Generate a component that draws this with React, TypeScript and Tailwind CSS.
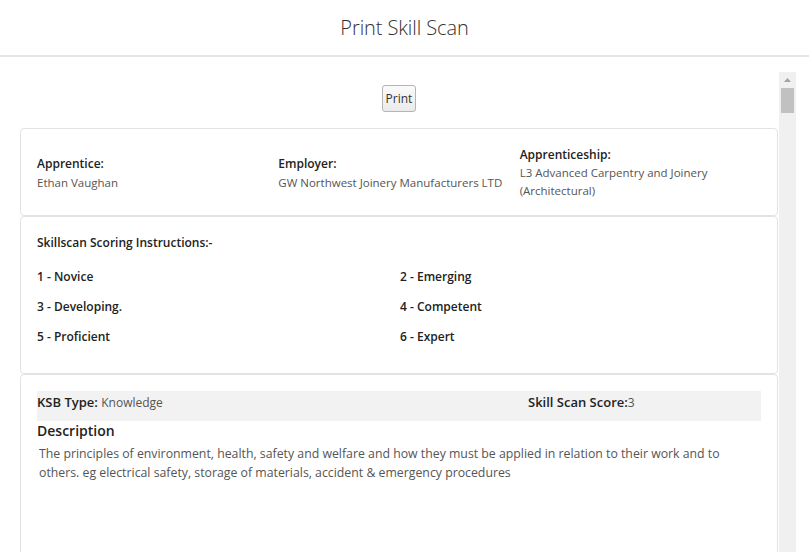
import React from "react";

const font = { fontFamily: '"Open Sans", "Noto Sans", sans-serif' };

export default function App() {
  return (
    <div className="w-[809px] h-[552px] overflow-hidden bg-white text-[#333]" style={font}>
      <div className="h-[57px] flex items-center justify-center border-b-2 border-[#e5e5e5]">
        <h1 className="text-[20px] font-light text-[#333] tracking-[-0.1px]">Print Skill Scan</h1>
      </div>
      <div className="flex pt-[15px] pl-[20px] pr-[13px]">
        <div className="flex-1 flex flex-col">
          <div className="flex justify-center pt-[13px] pb-[16px]">
            <button className="h-[27px] w-[34px] text-[12px] text-[#333] border border-[#b5b5b5] rounded-[3px] bg-gradient-to-b from-[#fafafa] to-[#ebebeb] leading-none">
              Print
            </button>
          </div>
          <div className="border border-[#e2e2e2] rounded-[4px] h-[88px] px-[16px] flex items-center text-[12px]">
            <div className="grid grid-cols-3 w-full items-center">
              <div className="pt-[1px]">
                <div className="font-semibold text-[#222] leading-[19px]">Apprentice:</div>
                <div className="text-[#555] text-[11.5px] leading-[19px]">Ethan Vaughan</div>
              </div>
              <div className="pt-[1px]">
                <div className="font-semibold text-[#222] leading-[19px]">Employer:</div>
                <div className="text-[#555] text-[11.5px] leading-[19px]">GW Northwest Joinery Manufacturers LTD</div>
              </div>
              <div className="pt-[2px]">
                <div className="font-semibold text-[#222] leading-[18px]">Apprenticeship:</div>
                <div className="text-[#555] text-[11.5px] leading-[18px]">L3 Advanced Carpentry and Joinery (Architectural)</div>
              </div>
            </div>
          </div>
          <div className="border border-[#e2e2e2] rounded-[4px] h-[158px] px-[16px] pt-[17px] text-[12px] font-semibold text-[#222]">
            <div className="leading-[18px]">Skillscan Scoring Instructions:-</div>
            <div className="grid grid-cols-2 mt-[16px] gap-y-[12px] leading-[18px]">
              <div>1 - Novice</div>
              <div className="pl-[1px]">2 - Emerging</div>
              <div>3 - Developing.</div>
              <div className="pl-[1px]">4 - Competent</div>
              <div>5 - Proficient</div>
              <div className="pl-[1px]">6 - Expert</div>
            </div>
          </div>
          <div className="border border-[#e2e2e2] rounded-[4px] h-[200px] px-[16px] pt-[16px]">
            <div className="bg-[#f2f2f2] h-[30px] flex items-start pt-[2px] text-[13px] leading-[18px]">
              <div className="w-[491px]">
                <span className="font-semibold text-[#222]">KSB Type: </span>
                <span className="text-[#555] text-[12px]">Knowledge</span>
              </div>
              <div>
                <span className="font-semibold text-[#222]">Skill Scan Score:</span>
                <span className="text-[#555] text-[12px]">3</span>
              </div>
            </div>
            <div className="font-semibold text-[14px] text-[#222] leading-[20px]">Description</div>
            <p className="text-[12.3px] text-[#555] leading-[19px] pl-[2px] pr-[30px] mt-[3px]">
              The principles of environment, health, safety and welfare and how they must be applied in relation to their work and to others. eg electrical safety, storage of materials, accident &amp; emergency procedures
            </p>
          </div>
        </div>
        <div className="w-[17px] ml-[1px] bg-[#f0f0f0] flex flex-col items-center h-[500px]">
          <div className="h-[16px] flex items-center justify-center">
            <svg width="7" height="4" viewBox="0 0 7 4"><path d="M0 4 L3.5 0 L7 4 Z" fill="#a3a3a3" /></svg>
          </div>
          <div className="w-[13px] h-[25px] bg-[#c1c1c1]" />
        </div>
      </div>
    </div>
  );
}
